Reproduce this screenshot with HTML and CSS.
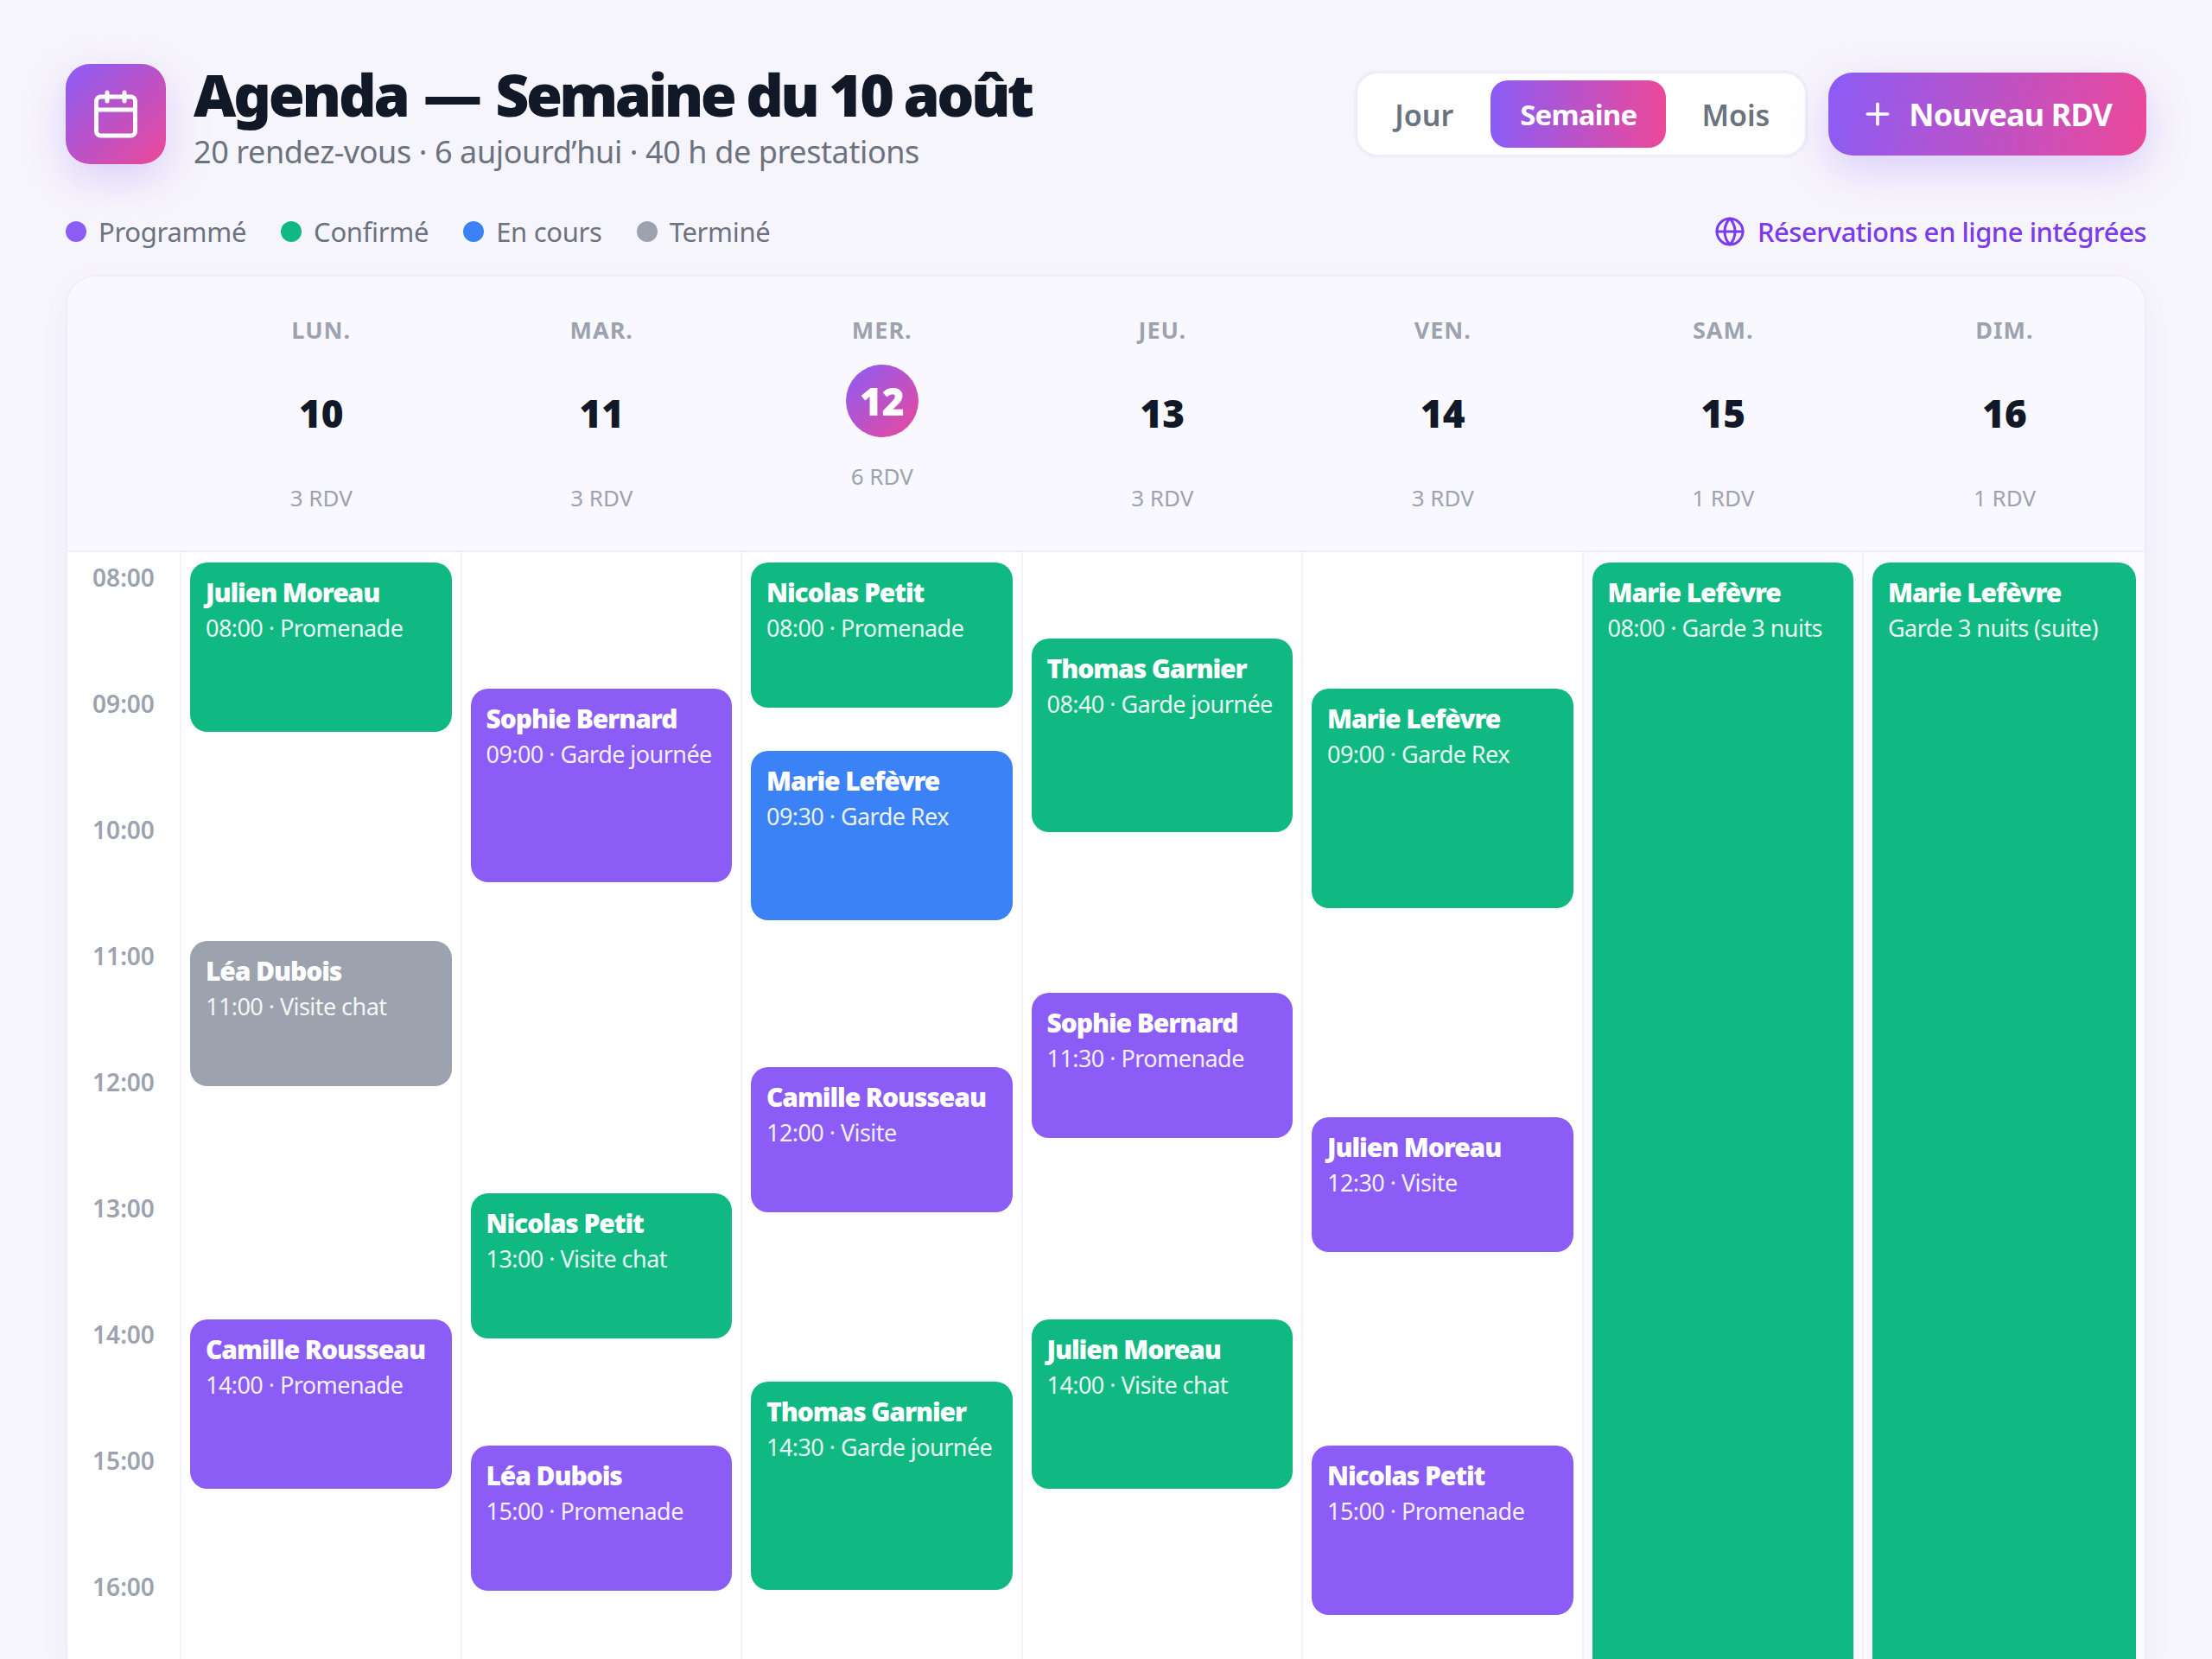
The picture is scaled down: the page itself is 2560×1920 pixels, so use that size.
FILE: index.html
```html
<!DOCTYPE html>
<html lang="fr">
<head>
  <meta charset="UTF-8">
  <title>Agenda — Semaine du 10 août</title>
  <link rel="stylesheet" href="styles.css">
</head>
<body>
<div class="page">

  <header class="topbar">
    <div class="brand">
      <div class="brand-icon">
        <svg width="60" height="60" viewBox="0 0 24 24" fill="none" stroke="#fff" stroke-width="2" stroke-linecap="round" stroke-linejoin="round">
          <path d="M8 2v4"/><path d="M16 2v4"/><rect x="3" y="4" width="18" height="18" rx="2"/><path d="M3 10h18"/>
        </svg>
      </div>
      <div class="brand-text">
        <h1>Agenda <span class="dash">—</span> <span class="week">Semaine du 10 août</span></h1>
        <p class="subtitle">20 rendez-vous · 6 aujourd’hui · 40 h de prestations</p>
      </div>
    </div>
    <div class="actions">
      <div class="toggle">
        <span class="toggle-item first">Jour</span>
        <span class="toggle-item active">Semaine</span>
        <span class="toggle-item">Mois</span>
      </div>
      <button class="btn-new">
        <svg width="40" height="40" viewBox="0 0 24 24" fill="none" stroke="#fff" stroke-width="2.2" stroke-linecap="round"><path d="M5 12h14"/><path d="M12 5v14"/></svg>
        Nouveau RDV
      </button>
    </div>
  </header>

  <div class="legend-row">
    <div class="legend">
      <span class="legend-item"><i class="dot purple"></i>Programmé</span>
      <span class="legend-item"><i class="dot green"></i>Confirmé</span>
      <span class="legend-item"><i class="dot blue"></i>En cours</span>
      <span class="legend-item"><i class="dot gray"></i>Terminé</span>
    </div>
    <div class="online">
      <svg width="36" height="36" viewBox="0 0 24 24" fill="none" stroke="#7c3aed" stroke-width="2" stroke-linecap="round" stroke-linejoin="round">
        <circle cx="12" cy="12" r="10"/><path d="M12 2a14.5 14.5 0 0 0 0 20 14.5 14.5 0 0 0 0-20"/><path d="M2 12h20"/>
      </svg>
      Réservations en ligne intégrées
    </div>
  </div>

  <section class="calendar">
    <div class="week-head">
      <div></div>
      <div class="day-head"><div class="day-name">Lun.</div><div class="day-num">10</div><div class="day-count">3 RDV</div></div>
      <div class="day-head"><div class="day-name">Mar.</div><div class="day-num">11</div><div class="day-count">3 RDV</div></div>
      <div class="day-head"><div class="day-name">Mer.</div><div class="day-num today">12</div><div class="day-count">6 RDV</div></div>
      <div class="day-head"><div class="day-name">Jeu.</div><div class="day-num">13</div><div class="day-count">3 RDV</div></div>
      <div class="day-head"><div class="day-name">Ven.</div><div class="day-num">14</div><div class="day-count">3 RDV</div></div>
      <div class="day-head"><div class="day-name">Sam.</div><div class="day-num">15</div><div class="day-count">1 RDV</div></div>
      <div class="day-head"><div class="day-name">Dim.</div><div class="day-num">16</div><div class="day-count">1 RDV</div></div>
    </div>

    <div class="week-body">
      <div class="hours">
        <div class="hour">08:00</div>
        <div class="hour">09:00</div>
        <div class="hour">10:00</div>
        <div class="hour">11:00</div>
        <div class="hour">12:00</div>
        <div class="hour">13:00</div>
        <div class="hour">14:00</div>
        <div class="hour">15:00</div>
        <div class="hour">16:00</div>
      </div>

      <div class="day">
        <div class="event green" style="top:12px;height:196px"><b>Julien Moreau</b><span>08:00 · Promenade</span></div>
        <div class="event gray" style="top:450px;height:168px"><b>Léa Dubois</b><span>11:00 · Visite chat</span></div>
        <div class="event purple" style="top:888px;height:196px"><b>Camille Rousseau</b><span>14:00 · Promenade</span></div>
      </div>
      <div class="day">
        <div class="event purple" style="top:158px;height:224px"><b>Sophie Bernard</b><span>09:00 · Garde journée</span></div>
        <div class="event green" style="top:742px;height:168px"><b>Nicolas Petit</b><span>13:00 · Visite chat</span></div>
        <div class="event purple" style="top:1034px;height:168px"><b>Léa Dubois</b><span>15:00 · Promenade</span></div>
      </div>
      <div class="day">
        <div class="event green" style="top:12px;height:168px"><b>Nicolas Petit</b><span>08:00 · Promenade</span></div>
        <div class="event blue" style="top:230px;height:196px"><b>Marie Lefèvre</b><span>09:30 · Garde Rex</span></div>
        <div class="event purple" style="top:596px;height:168px"><b>Camille Rousseau</b><span>12:00 · Visite</span></div>
        <div class="event green" style="top:960px;height:241px"><b>Thomas Garnier</b><span>14:30 · Garde journée</span></div>
      </div>
      <div class="day">
        <div class="event green" style="top:100px;height:224px"><b>Thomas Garnier</b><span>08:40 · Garde journée</span></div>
        <div class="event purple" style="top:510px;height:168px"><b>Sophie Bernard</b><span>11:30 · Promenade</span></div>
        <div class="event green" style="top:888px;height:196px"><b>Julien Moreau</b><span>14:00 · Visite chat</span></div>
      </div>
      <div class="day">
        <div class="event green" style="top:158px;height:254px"><b>Marie Lefèvre</b><span>09:00 · Garde Rex</span></div>
        <div class="event purple" style="top:654px;height:156px"><b>Julien Moreau</b><span>12:30 · Visite</span></div>
        <div class="event purple" style="top:1034px;height:196px"><b>Nicolas Petit</b><span>15:00 · Promenade</span></div>
      </div>
      <div class="day weekend">
        <div class="event green" style="top:12px;height:1400px"><b>Marie Lefèvre</b><span>08:00 · Garde 3 nuits</span></div>
      </div>
      <div class="day weekend">
        <div class="event green" style="top:12px;height:1400px"><b>Marie Lefèvre</b><span>Garde 3 nuits (suite)</span></div>
      </div>
    </div>
  </section>

</div>
</body>
</html>
```

FILE: styles.css
```css
* {
  box-sizing: border-box;
}

body {
  margin: 0;
  font-family: "Noto Sans", sans-serif;
  background-color: #f7f5fc;
  color: #111827;
}

.page {
  height: 100vh;
  overflow: hidden;
  padding: 72px 76px 0;
}

/* en-tete */
.topbar {
  display: flex;
  justify-content: space-between;
  align-items: flex-start;
}

.brand {
  display: flex;
  align-items: flex-start;
  gap: 32px;
}

.brand-icon {
  width: 116px;
  height: 116px;
  margin-top: 2px;
  border-radius: 28px;
  display: flex;
  align-items: center;
  justify-content: center;
  background: linear-gradient(135deg, #8b5cf6, #ec4899);
  box-shadow: 0 16px 48px rgba(139, 92, 246, 0.25);
}

.brand-text {
  margin-top: 5px;
}

h1 {
  margin: 0;
  font-size: 68px;
  line-height: 64px;
  font-weight: 900;
  letter-spacing: -3.2px;
}

.dash {
  margin: 0 4px;
}

.week {
  letter-spacing: -3.65px;
}

.subtitle {
  margin: 15px 0 0;
  font-size: 36px;
  line-height: 40px;
  letter-spacing: -0.4px;
  color: #6b7280;
}

.actions {
  display: flex;
  align-items: center;
  gap: 23px;
  margin-top: 9px;
}

.toggle {
  display: flex;
  gap: 8px;
  padding: 8px;
  background: #fff;
  border: 4px solid #f0edfb;
  border-radius: 28px;
}

.toggle-item {
  height: 78px;
  line-height: 80px;
  padding: 0 33px;
  border-radius: 20px;
  font-size: 34px;
  font-weight: 600;
  color: #6b7280;
}

.toggle-item.first {
  padding: 0 35px;
}

.toggle-item.active {
  padding: 0 34px;
  font-size: 33px;
  font-weight: 700;
  letter-spacing: -0.8px;
  color: #fff;
  background: linear-gradient(90deg, #8b5cf6, #ec4899);
}

.btn-new {
  display: flex;
  align-items: center;
  gap: 16px;
  height: 96px;
  padding: 0 40px 0 37px;
  border: none;
  border-radius: 28px;
  font-family: inherit;
  font-size: 36px;
  font-weight: 700;
  letter-spacing: -0.9px;
  color: #fff;
  background: linear-gradient(100deg, #8b5cf6, #ec4899);
  box-shadow: 0 16px 48px rgba(139, 92, 246, 0.25);
}

/* legende */
.legend-row {
  display: flex;
  justify-content: space-between;
  align-items: center;
  margin-top: 44px;
  height: 56px;
}

.legend {
  display: flex;
  gap: 40px;
}

.legend-item {
  display: flex;
  align-items: center;
  gap: 14px;
  font-size: 31px;
  letter-spacing: -0.3px;
  color: #6b7280;
}

.dot {
  width: 24px;
  height: 24px;
  border-radius: 50%;
}

.dot.purple { background-color: #8b5cf6; }
.dot.green { background-color: #10b981; }
.dot.blue { background-color: #3b82f6; }
.dot.gray { background-color: #9ca3af; }

.online {
  display: flex;
  align-items: center;
  gap: 14px;
  font-size: 31px;
  font-weight: 500;
  letter-spacing: -0.5px;
  color: #7c3aed;
}

/* calendrier */
.calendar {
  margin-top: 22px;
  background: #fff;
  border: 2px solid #f0edfb;
  border-radius: 36px;
  box-shadow: 0 8px 40px rgba(139, 92, 246, 0.06);
  overflow: hidden;
}

.week-head {
  display: grid;
  grid-template-columns: 130px repeat(6, 324.5px) 1fr;
  height: 319px;
  background-color: #faf8ff;
  border-bottom: 2px solid #f0edfb;
}

.day-head {
  display: flex;
  flex-direction: column;
  align-items: center;
  padding: 42px 0 0 3px;
}

.day-name {
  height: 40px;
  line-height: 40px;
  font-size: 27px;
  font-weight: 700;
  letter-spacing: 1px;
  text-transform: uppercase;
  color: #9ca3af;
}

.day-num {
  height: 112px;
  line-height: 112px;
  margin-top: 20px;
  font-size: 44px;
  font-weight: 900;
}

.day-num.today {
  width: 84px;
  height: 84px;
  line-height: 84px;
  margin-bottom: 3px;
  text-align: center;
  border-radius: 50%;
  color: #fff;
  background: linear-gradient(135deg, #8b5cf6, #ec4899);
}

.day-count {
  margin-top: 24px;
  font-size: 26px;
  line-height: 36px;
  color: #9ca3af;
}

.week-body {
  display: grid;
  grid-template-columns: 130px repeat(6, 324.5px) 1fr;
  height: 1314px;
}

.hours {
  display: grid;
  grid-auto-rows: 146px;
}

.hour {
  padding-top: 9px;
  text-align: center;
  font-size: 28px;
  line-height: 40px;
  font-weight: 600;
  color: #9ca3af;
}

.day {
  position: relative;
  border-left: 2px solid #f3f1fb;
}

.day.weekend {
  background-color: #fbfaff;
}

.event {
  position: absolute;
  left: 10px;
  right: 10px;
  padding: 14px 18px;
  border-radius: 20px;
  color: #fff;
  white-space: nowrap;
}

.event.purple { background-color: #8b5cf6; }
.event.green { background-color: #10b981; }
.event.blue { background-color: #3b82f6; }
.event.gray { background-color: #9ca3af; }

.event b {
  display: block;
  font-size: 30px;
  line-height: 42px;
  font-weight: 900;
  letter-spacing: -1.1px;
}

.event span {
  display: block;
  font-size: 27px;
  line-height: 40px;
  letter-spacing: -0.55px;
  opacity: 0.9;
}
```
